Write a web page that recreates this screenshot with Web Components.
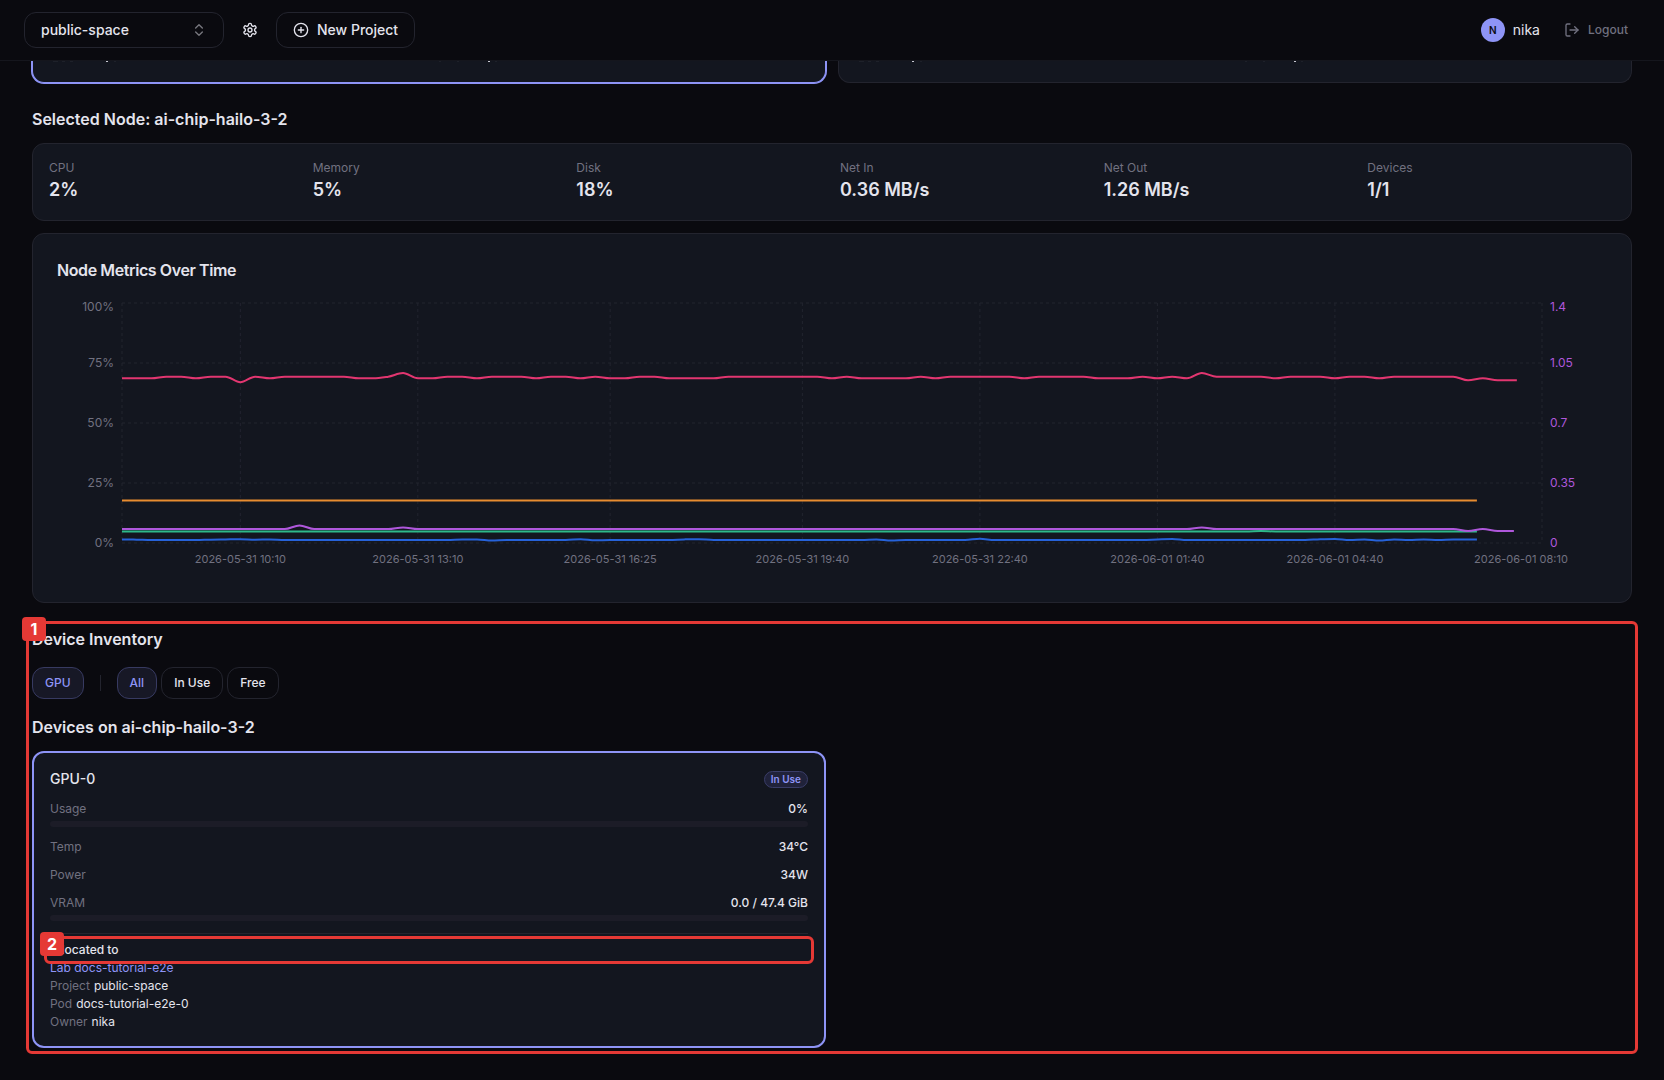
<!DOCTYPE html>
<html lang="en">
<head>
<meta charset="utf-8">
<title>Node Metrics</title>
<style>
  :root {
    --bg: #0a0a0f;
    --card: #13161f;
    --line: #23242e;
    --text: #e4e4ed;
    --muted: #717180;
    --accent: #8e94f6;
    --mark: #e53935;
  }

  body {
    margin: 0;
    background: var(--bg);
    color: var(--text);
    font: 400 12px/16px Inter, sans-serif;
  }

  main {
    display: flex;
    flex-direction: column;
    padding: 0 32px 32px;
  }

  node-stats, node-chart {
    margin-top: 12px;
  }

  section-title {
    margin-top: 24px;
  }

  callout-frame {
    margin-top: 24px;
  }
</style>
</head>
<body>

<app-header space="public-space" user="nika"></app-header>

<main>
  <node-list></node-list>
  <section-title>Selected Node: ai-chip-hailo-3-2</section-title>
  <node-stats>
    <stat-item label="CPU">2%</stat-item>
    <stat-item label="Memory">5%</stat-item>
    <stat-item label="Disk">18%</stat-item>
    <stat-item label="Net In">0.36 MB/s</stat-item>
    <stat-item label="Net Out">1.26 MB/s</stat-item>
    <stat-item label="Devices">1/1</stat-item>
  </node-stats>
  <node-chart>Node Metrics Over Time</node-chart>
  <callout-frame number="1">
    <device-inventory node="ai-chip-hailo-3-2"></device-inventory>
  </callout-frame>
</main>

<script>
const ICONS_SVG = {
  chevrons: `<svg viewBox="0 0 24 24"><path d="m7 15 5 5 5-5"/><path d="m7 9 5-5 5 5"/></svg>`,
  settings: `<svg viewBox="0 0 24 24"><path d="M12.22 2h-.44a2 2 0 0 0-2 2v.18a2 2 0 0 1-1 1.73l-.43.25a2 2 0 0 1-2 0l-.15-.08a2 2 0 0 0-2.73.73l-.22.38a2 2 0 0 0 .73 2.73l.15.1a2 2 0 0 1 1 1.72v.51a2 2 0 0 1-1 1.74l-.15.09a2 2 0 0 0-.73 2.73l.22.38a2 2 0 0 0 2.73.73l.15-.08a2 2 0 0 1 2 0l.43.25a2 2 0 0 1 1 1.73V20a2 2 0 0 0 2 2h.44a2 2 0 0 0 2-2v-.18a2 2 0 0 1 1-1.73l.43-.25a2 2 0 0 1 2 0l.15.08a2 2 0 0 0 2.73-.73l.22-.39a2 2 0 0 0-.73-2.73l-.15-.08a2 2 0 0 1-1-1.74v-.5a2 2 0 0 1 1-1.74l.15-.09a2 2 0 0 0 .73-2.73l-.22-.38a2 2 0 0 0-2.73-.73l-.15.08a2 2 0 0 1-2 0l-.43-.25a2 2 0 0 1-1-1.73V4a2 2 0 0 0-2-2z"/><circle cx="12" cy="12" r="3"/></svg>`,
  plus: `<svg viewBox="0 0 24 24"><circle cx="12" cy="12" r="10"/><path d="M8 12h8"/><path d="M12 8v8"/></svg>`,
  logout: `<svg viewBox="0 0 24 24"><path d="M9 21H5a2 2 0 0 1-2-2V5a2 2 0 0 1 2-2h4"/><path d="m16 17 5-5-5-5"/><path d="M21 12H9"/></svg>`,
};

const ICON_CSS = `
  svg {
    width: 16px;
    height: 16px;
    flex: none;
    fill: none;
    stroke: currentColor;
    stroke-width: 2;
    stroke-linecap: round;
    stroke-linejoin: round;
  }
`;

// header bar

class AppHeader extends HTMLElement {
  constructor() {
    super();
    this._shadowRoot = this.attachShadow({ mode: "open" });
  }

  connectedCallback() {
    const space = this.getAttribute("space");
    const user = this.getAttribute("user");
    this._shadowRoot.innerHTML = `
      <style>
        ${ICON_CSS}
        :host {
          display: block;
          position: sticky;
          top: 0;
          z-index: 5;
          background: var(--bg);
          border-bottom: 1px solid #15161d;
        }
        header {
          display: flex;
          align-items: center;
          gap: 8px;
          height: 60px;
          padding: 0 24px;
        }
        select, button {
          box-sizing: border-box;
          height: 36px;
          margin: 0;
          border: 1px solid var(--line);
          border-radius: 12px;
          background: transparent;
          color: inherit;
          font: 500 14px/20px Inter, sans-serif;
        }
        button {
          display: flex;
          align-items: center;
          justify-content: center;
          gap: 8px;
          padding: 0 16px;
        }
        .space {
          display: grid;
          width: 200px;
          align-items: center;
        }
        .space > * {
          grid-area: 1 / 1;
        }
        select {
          appearance: none;
          width: 100%;
          padding: 0 16px;
        }
        .space svg {
          justify-self: end;
          margin-right: 17px;
          opacity: 0.5;
          pointer-events: none;
        }
        .settings {
          width: 36px;
          padding: 0;
          border: 0;
        }
        .user {
          display: flex;
          align-items: center;
          gap: 8px;
          margin-left: auto;
          margin-right: 4px;
          font-size: 14px;
          line-height: 20px;
        }
        .avatar {
          width: 24px;
          border-radius: 50%;
          background: var(--accent);
          color: var(--bg);
          font-size: 10px;
          font-weight: 600;
          line-height: 24px;
          text-align: center;
        }
        .logout {
          padding: 0 12px;
          border: 0;
          color: var(--muted);
          font-size: 12px;
        }
      </style>
      <header>
        <div class="space">
          <select aria-label="Space"><option>${space}</option></select>
          ${ICONS_SVG.chevrons}
        </div>
        <button class="settings" aria-label="Settings">${ICONS_SVG.settings}</button>
        <button class="new">${ICONS_SVG.plus}New Project</button>
        <div class="user">
          <span class="avatar">${user[0].toUpperCase()}</span>
          <span>${user}</span>
        </div>
        <button class="logout">${ICONS_SVG.logout}Logout</button>
      </header>
    `;
  }
}

// node cards, scrolled almost out of view below the header

class NodeList extends HTMLElement {
  constructor() {
    super();
    this._shadowRoot = this.attachShadow({ mode: "open" });
    const card = `
      <svg width="100%" height="2">
        <path d="M20 0h5m4 0h3m5 0h3m41 0h2" stroke="#2a2c36"/>
        <path d="M73 0h2v1h-2z" fill="#c9c9d2"/>
        <svg x="50%">
          <path d="M10 0h2m16 0h2m36 0h2" stroke="#2a2c36"/>
          <path d="M59 0h2v1h-2z" fill="#c9c9d2"/>
        </svg>
      </svg>
    `;
    this._shadowRoot.innerHTML = `
      <style>
        :host {
          display: grid;
          grid-template-columns: 1fr 1fr;
          gap: 12px;
        }
        div {
          height: 21px;
          border: 1px solid var(--line);
          border-top: 0;
          border-radius: 0 0 12px 12px;
          background: var(--card);
        }
        .selected {
          border-color: var(--accent);
          box-shadow: 0 0 0 1px var(--accent);
        }
        svg {
          display: block;
        }
      </style>
      <div class="selected">${card}</div>
      <div>${card}</div>
    `;
  }
}

class SectionTitle extends HTMLElement {
  constructor() {
    super();
    this._shadowRoot = this.attachShadow({ mode: "open" });
    this._shadowRoot.innerHTML = `
      <style>
        :host { display: block; }
        h2 { margin: 0; font-size: 16px; font-weight: 600; line-height: 24px; }
      </style>
      <h2><slot></slot></h2>
    `;
  }
}

class NodeStats extends HTMLElement {
  constructor() {
    super();
    this._shadowRoot = this.attachShadow({ mode: "open" });
    this._shadowRoot.innerHTML = `
      <style>
        :host {
          display: grid;
          grid-template-columns: repeat(6, 1fr);
          gap: 16px;
          padding: 16px;
          border: 1px solid var(--line);
          border-radius: 12px;
          background: var(--card);
        }
      </style>
      <slot></slot>
    `;
  }
}

class StatItem extends HTMLElement {
  constructor() {
    super();
    this._shadowRoot = this.attachShadow({ mode: "open" });
  }

  connectedCallback() {
    this._shadowRoot.innerHTML = `
      <style>
        :host { display: block; }
        .label { color: var(--muted); }
        .value { font-size: 18px; font-weight: 600; line-height: 28px; }
      </style>
      <div class="label">${this.getAttribute("label")}</div>
      <div class="value"><slot></slot></div>
    `;
  }
}

// line chart, one sample every 15 minutes

const SAMPLES = 96;
const TICKS = [
  [8, "2026-05-31 10:10"],
  [20, "2026-05-31 13:10"],
  [33, "2026-05-31 16:25"],
  [46, "2026-05-31 19:40"],
  [58, "2026-05-31 22:40"],
  [70, "2026-06-01 01:40"],
  [82, "2026-06-01 04:40"],
  [96, "2026-06-01 08:10"],
];

// a/b are the two common levels, the rest are dips and peaks
const LEVELS = { a: 68.6, b: 69.3, d: 67, p: 70.8, c: 67.8 };
const POWER =
  "aaabbabbdbabbbbbaabpaabbabbbabbabaabbaaaabbbbbbb" +
  "abaaaababbbbbabbbbaaababapbbbbabbbabbabbbbbcacc";

function flat(base, end, changes = {}) {
  const points = [];
  for (let i = 0; i < end; i++) {
    points.push([i, i in changes ? changes[i] : base]);
  }
  points.push([end, points[points.length - 1][1]]);
  return points;
}

const SERIES = [
  { color: "#2662d9", points: flat(1.25, 91.6, { 0: 1.5, 1: 1.4, 4: 1.2, 6: 1.4, 7: 1.5, 8: 1.6, 9: 1.4, 10: 1.5, 13: 1.3, 23: 1.5, 24: 1.5, 25: 1, 31: 1.6, 32: 1.1, 38: 1.5, 39: 1.6, 51: 1.5, 52: 1, 58: 1.8, 59: 1.2, 70: 1.5, 71: 1.7, 81: 1.6, 82: 1.7, 84: 1.5, 85: 1, 86: 1.5, 87: 1.2, 88: 1.5, 90: 1.5, 91: 1.5 }) },
  { color: "#2eb88a", points: flat(4.8, 91.6, { 77: 5 }) },
  { color: "#e88c30", points: flat(17.7, 91.6) },
  { color: "#af57db", points: flat(5.8, 94.1, { 12: 7.3, 19: 6.5, 73: 6.5, 91: 5, 92: 5.8, 93: 5, 94: 5 }) },
  { color: "#e23670", points: flat(LEVELS.b, 94.3, POWER.split("").map((k) => LEVELS[k])) },
];

// monotone cubic path through the points
function curve(pts) {
  const slope = (p, q) => (q[1] - p[1]) / (q[0] - p[0]);
  const t = pts.map((p, i) => {
    if (i === 0 || i === pts.length - 1) return 0;
    const l = slope(pts[i - 1], p);
    const r = slope(p, pts[i + 1]);
    return l * r <= 0 ? 0 : (2 * l * r) / (l + r);
  });
  let d = `M${pts[0]}`;
  for (let i = 1; i < pts.length; i++) {
    const [x0, y0] = pts[i - 1];
    const [x1, y1] = pts[i];
    const h = (x1 - x0) / 3;
    d += `C${x0 + h},${y0 + h * t[i - 1]} ${x1 - h},${y1 - h * t[i]} ${x1},${y1}`;
  }
  return d;
}

class NodeChart extends HTMLElement {
  constructor() {
    super();
    this._shadowRoot = this.attachShadow({ mode: "open" });
    this._shadowRoot.innerHTML = `
      <style>
        :host {
          display: block;
          padding: 24px;
          border: 1px solid var(--line);
          border-radius: 12px;
          background: var(--card);
        }
        h3 {
          margin: 0 0 16px;
          font-size: 16px;
          font-weight: 600;
          line-height: 24px;
          letter-spacing: -0.025em;
        }
        svg { display: block; width: 100%; height: 280px; }
        text { fill: var(--muted); font-size: 12px; }
        .time { font-size: 11px; text-anchor: middle; }
        .left { text-anchor: end; }
        .right { fill: #af57db; }
        .grid { stroke: #22242f; stroke-dasharray: 3 3; }
        .line { fill: none; stroke-width: 2; }
      </style>
      <h3><slot></slot></h3>
      <svg role="img" aria-label="Node metrics"></svg>
    `;
    this.$svg = this._shadowRoot.querySelector("svg");
  }

  connectedCallback() {
    this.render();
    new ResizeObserver(() => this.render()).observe(this.$svg);
  }

  render() {
    const left = 65;
    const top = 5;
    const height = 240;
    const width = this.$svg.clientWidth - left * 2;
    const x = (i) => left + (i / SAMPLES) * width;
    const y = (v) => top + height - (v / 100) * height;

    let out = "";
    [0, 25, 50, 75, 100].forEach((v, i) => {
      const base = v === 100 ? y(v) + 8 : y(v) + 4;
      out += `<path class="grid" d="M${x(0)} ${y(v)}H${x(SAMPLES)}"/>`;
      out += `<text class="left" x="${left - 8}" y="${base}">${v}%</text>`;
      out += `<text class="right" x="${left + width + 8}" y="${base}">${+(0.35 * i).toFixed(2)}</text>`;
    });
    out += `<path class="grid" d="M${x(0)} ${y(100)}V${y(0)}"/>`;
    TICKS.forEach(([i, label]) => {
      // the last label is pulled in from the edge
      const labelX = i === SAMPLES ? x(i) - 21 : x(i);
      out += `<path class="grid" d="M${x(i)} ${y(100)}V${y(0)}"/>`;
      out += `<text class="time" x="${labelX}" y="${y(0) + 20}">${label}</text>`;
    });
    SERIES.forEach((s) => {
      const pts = s.points.map(([i, v]) => [x(i), y(v)]);
      out += `<path class="line" stroke="${s.color}" d="${curve(pts)}"/>`;
    });
    this.$svg.innerHTML = out;
  }
}

// numbered outline drawn around its content

class CalloutFrame extends HTMLElement {
  constructor() {
    super();
    this._shadowRoot = this.attachShadow({ mode: "open" });
  }

  connectedCallback() {
    this._shadowRoot.innerHTML = `
      <style>
        :host { display: block; position: relative; }
        .frame {
          position: absolute;
          inset: -6px;
          z-index: 2;
          border: 3px solid var(--mark);
          border-radius: 6px;
          pointer-events: none;
        }
        .number {
          position: absolute;
          top: -10px;
          left: -10px;
          z-index: 3;
          width: 24px;
          border-radius: 4px;
          background: var(--mark);
          color: #fff;
          font-size: 16px;
          font-weight: 700;
          line-height: 24px;
          text-align: center;
        }
      </style>
      <slot></slot>
      <div class="frame"></div>
      <div class="number">${this.getAttribute("number")}</div>
    `;
  }
}

class FilterButton extends HTMLElement {
  constructor() {
    super();
    this._shadowRoot = this.attachShadow({ mode: "open" });
    this._shadowRoot.innerHTML = `
      <style>
        :host { display: block; }
        button {
          height: 32px;
          padding: 0 12px;
          border: 1px solid var(--line);
          border-radius: 12px;
          background: transparent;
          color: inherit;
          font: 500 12px/16px Inter, sans-serif;
        }
        :host([active]) button {
          border-color: #373a61;
          background: #171826;
          color: var(--accent);
        }
      </style>
      <button><slot></slot></button>
    `;
  }
}

class DeviceInventory extends HTMLElement {
  constructor() {
    super();
    this._shadowRoot = this.attachShadow({ mode: "open" });
  }

  connectedCallback() {
    this._shadowRoot.innerHTML = `
      <style>
        :host { display: block; }
        .filters {
          display: flex;
          align-items: center;
          gap: 4px;
          margin: 16px 0;
        }
        .separator {
          width: 1px;
          height: 16px;
          margin: 0 12px;
          background: var(--line);
        }
        .devices {
          display: grid;
          grid-template-columns: 1fr 1fr;
          gap: 12px;
          margin-top: 12px;
        }
      </style>
      <section-title>Device Inventory</section-title>
      <div class="filters">
        <filter-button active>GPU</filter-button>
        <div class="separator"></div>
        <filter-button active>All</filter-button>
        <filter-button>In Use</filter-button>
        <filter-button>Free</filter-button>
      </div>
      <section-title>Devices on ${this.getAttribute("node")}</section-title>
      <div class="devices">
        <device-card name="GPU-0" status="In Use"></device-card>
      </div>
    `;
  }
}

class DeviceCard extends HTMLElement {
  constructor() {
    super();
    this._shadowRoot = this.attachShadow({ mode: "open" });
  }

  connectedCallback() {
    this._shadowRoot.innerHTML = `
      <style>
        :host {
          display: flex;
          flex-direction: column;
          gap: 12px;
          padding: 16px;
          border: 2px solid var(--accent);
          border-radius: 12px;
          background: var(--card);
        }
        .head, .row {
          display: flex;
          align-items: center;
          justify-content: space-between;
          font-weight: 500;
        }
        h3 {
          margin: 0;
          font-size: 14px;
          font-weight: 500;
          line-height: 20px;
        }
        .status {
          padding: 0 6px;
          border: 1px solid #3a3d68;
          border-radius: 9px;
          background: #20223a;
          color: var(--accent);
          font-size: 10px;
          font-weight: 600;
          line-height: 15px;
        }
        .label { color: var(--muted); font-weight: 400; }
        .bar {
          height: 6px;
          margin-top: 4px;
          border-radius: 3px;
          background: #1c1c27;
        }
        .owner {
          display: flex;
          flex-direction: column;
          gap: 2px;
          padding-top: 8px;
          border-top: 1px solid var(--line);
        }
        .owner callout-frame { margin: 0; font-weight: 500; }
        .owner div { display: flex; gap: 4px; }
        a { color: var(--accent); text-decoration: none; }
      </style>
      <div class="head">
        <h3>${this.getAttribute("name")}</h3>
        <span class="status">${this.getAttribute("status")}</span>
      </div>
      <div>
        <div class="row"><span class="label">Usage</span><span>0%</span></div>
        <div class="bar" role="progressbar" aria-label="Usage" aria-valuenow="0"></div>
      </div>
      <div class="row"><span class="label">Temp</span><span>34°C</span></div>
      <div class="row"><span class="label">Power</span><span>34W</span></div>
      <div>
        <div class="row"><span class="label">VRAM</span><span>0.0 / 47.4 GiB</span></div>
        <div class="bar" role="progressbar" aria-label="VRAM" aria-valuenow="0"></div>
      </div>
      <div class="owner">
        <callout-frame number="2">Allocated to</callout-frame>
        <a href="#lab">Lab docs-tutorial-e2e</a>
        <div><span class="label">Project</span><span>public-space</span></div>
        <div><span class="label">Pod</span><span>docs-tutorial-e2e-0</span></div>
        <div><span class="label">Owner</span><span>nika</span></div>
      </div>
    `;
  }
}

window.customElements.define("app-header", AppHeader);
window.customElements.define("node-list", NodeList);
window.customElements.define("section-title", SectionTitle);
window.customElements.define("node-stats", NodeStats);
window.customElements.define("stat-item", StatItem);
window.customElements.define("node-chart", NodeChart);
window.customElements.define("callout-frame", CalloutFrame);
window.customElements.define("filter-button", FilterButton);
window.customElements.define("device-inventory", DeviceInventory);
window.customElements.define("device-card", DeviceCard);
</script>
</body>
</html>
